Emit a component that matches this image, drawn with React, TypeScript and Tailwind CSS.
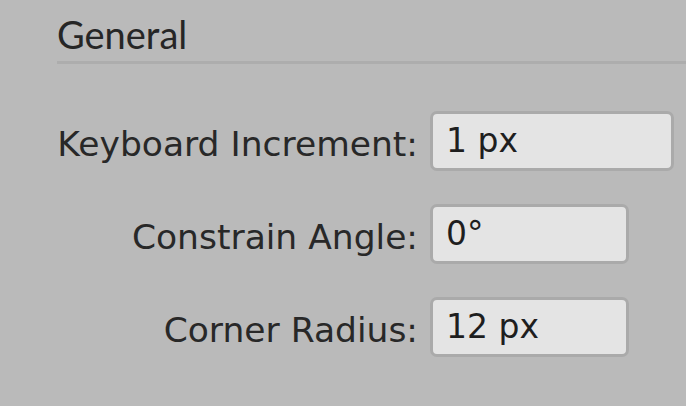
import React from 'react';

const rows = [
    { label: 'Keyboard Increment:', value: '1 px', width: 'w-[244px]' },
    { label: 'Constrain Angle:', value: '0°', width: 'w-[199px]' },
    { label: 'Corner Radius:', value: '12 px', width: 'w-[199px]' },
];

export default function App() {
    return (
        <div className="w-[686px] h-[406px] bg-[#bababa] overflow-hidden font-['DejaVu_Sans',sans-serif]">
            <div className="pl-[57px] pt-[12px]">
                <h2 className="text-[38px] leading-[45px] text-[#262626] font-['Lato',sans-serif]">General</h2>
                <div className="h-[3px] bg-[#adadad] mt-[4px]"></div>
            </div>

            <div className="flex flex-col gap-[33px] mt-[47px]">
                {rows.map((row) => (
                    <div key={row.label} className="flex items-center h-[60px]">
                        <span className="w-[418px] text-right text-[34.5px] leading-[40px] pt-[6px] text-[#282828]">{row.label}</span>
                        <div className={`ml-[12px] ${row.width} h-[60px] rounded-[7px] border-[3px] border-[#aaaaaa] bg-[#e4e4e4] flex items-center pl-[13px]`}>
                            <span className="text-[33px] text-[#1e1e1e]">{row.value}</span>
                        </div>
                    </div>
                ))}
            </div>
        </div>
    );
}
